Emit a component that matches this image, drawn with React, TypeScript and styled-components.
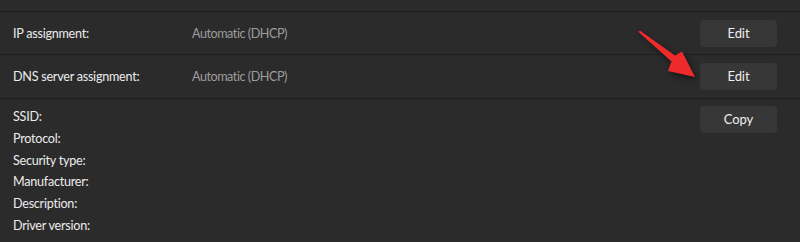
import React from "react";
import styled, { createGlobalStyle } from "styled-components";

const Global = createGlobalStyle`
  html, body { margin: 0; padding: 0; background: #2b2b2b; }
  body { font-family: "Lato", "Noto Sans", sans-serif; -webkit-font-smoothing: antialiased; }
`;

const Page = styled.div`
  position: relative;
  width: 800px;
  height: 242px;
  overflow: hidden;
  background: #2b2b2b;
  color: #ebebeb;
  font-size: 12.6px;
  letter-spacing: -0.25px;
`;

const TopStrip = styled.div`
  height: 11px;
  border-bottom: 1px solid #1e1e1e;
`;

const Row = styled.div<{ $h: number }>`
  display: grid;
  grid-template-columns: 179px 1fr auto;
  align-items: center;
  height: ${(p) => p.$h}px;
  padding: 0 23px 0 13px;
  border-bottom: 1px solid #1e1e1e;
`;

const Label = styled.span`
  color: #ebebeb;
  line-height: 18px;
  padding-top: 1px;
`;

const Value = styled.span`
  color: #9d9d9d;
  line-height: 18px;
  padding-top: 1px;
  letter-spacing: -0.45px;
`;

const Button = styled.button`
  width: 77px;
  height: 27px;
  border: none;
  border-radius: 4px;
  background: #373737;
  color: #efefef;
  font-family: inherit;
  font-size: 13px;
  letter-spacing: -0.1px;
  padding: 0 0 1px;
  cursor: default;
`;

const Details = styled.div`
  display: grid;
  grid-template-columns: 1fr auto;
  padding: 7px 23px 0 13px;
`;

const LabelList = styled.div`
  display: flex;
  flex-direction: column;
`;

const DetailLabel = styled.span`
  line-height: 21.8px;
  color: #ebebeb;
`;

const Arrow = styled.svg`
  position: absolute;
  left: 630px;
  top: 25px;
  filter: drop-shadow(2px 3px 3px rgba(0, 0, 0, 0.5));
`;

export default function App() {
  const details = [
    "SSID:",
    "Protocol:",
    "Security type:",
    "Manufacturer:",
    "Description:",
    "Driver version:",
  ];
  return (
    <Page>
      <Global />
      <TopStrip />
      <Row $h={42}>
        <Label>IP assignment:</Label>
        <Value>Automatic (DHCP)</Value>
        <Button>Edit</Button>
      </Row>
      <Row $h={43}>
        <Label>DNS server assignment:</Label>
        <Value>Automatic (DHCP)</Value>
        <Button>Edit</Button>
      </Row>
      <Details>
        <LabelList>
          {details.map((d) => (
            <DetailLabel key={d}>{d}</DetailLabel>
          ))}
        </LabelList>
        <Button>Copy</Button>
      </Details>
      <Arrow width="80" height="60" viewBox="630 25 80 60">
        <path
          d="M638 31.5 L640.5 31 L675 55.5 L682 51.5 L695 77 L668 71 L671.5 61.5 Z"
          fill="#ee2a2d"
        />
      </Arrow>
    </Page>
  );
}
